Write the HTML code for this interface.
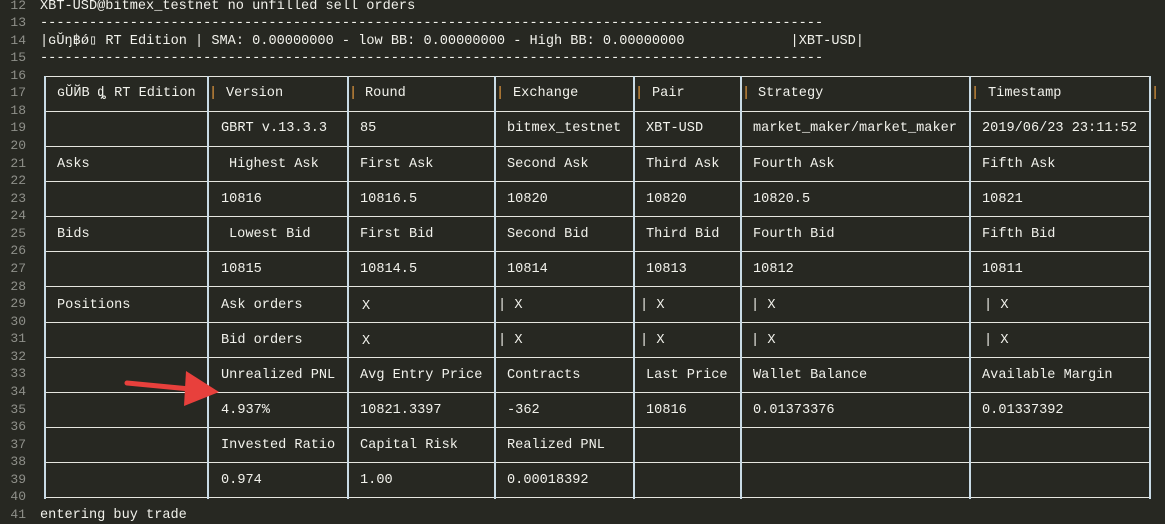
<!DOCTYPE html><html><head><style>
body{margin:0;width:1165px;height:523px;background:#272822;overflow:hidden;position:relative;font-family:"Liberation Mono","DejaVu Sans Mono",monospace;font-size:13.6px;color:#f2f2ec}
.t{position:absolute;white-space:pre;line-height:17px}
.ln{position:absolute;left:0;width:26px;text-align:right;color:#8f908a;font-size:13px;white-space:pre}
.h{position:absolute;height:1px;background:#e6e6e0;left:44px;width:1107px}
.v{position:absolute;width:2px;background:#c9dbe6;top:76px;height:423px}
.o{position:absolute;color:#f0a040}
</style></head><body>
<div class="ln" style="top:-2px">12</div><div class="ln" style="top:15px">13</div><div class="ln" style="top:33px">14</div><div class="ln" style="top:50px">15</div><div class="ln" style="top:68px">16</div><div class="ln" style="top:85px">17</div><div class="ln" style="top:103px">18</div><div class="ln" style="top:120px">19</div><div class="ln" style="top:138px">20</div><div class="ln" style="top:156px">21</div><div class="ln" style="top:173px">22</div><div class="ln" style="top:191px">23</div><div class="ln" style="top:208px">24</div><div class="ln" style="top:226px">25</div><div class="ln" style="top:243px">26</div><div class="ln" style="top:261px">27</div><div class="ln" style="top:279px">28</div><div class="ln" style="top:296px">29</div><div class="ln" style="top:314px">30</div><div class="ln" style="top:331px">31</div><div class="ln" style="top:349px">32</div><div class="ln" style="top:366px">33</div><div class="ln" style="top:384px">34</div><div class="ln" style="top:402px">35</div><div class="ln" style="top:419px">36</div><div class="ln" style="top:437px">37</div><div class="ln" style="top:454px">38</div><div class="ln" style="top:472px">39</div><div class="ln" style="top:489px">40</div><div class="ln" style="top:507px">41</div>

<div class="t" style="left:40px;top:-2px">XBT-USD@bitmex_testnet no unfilled sell orders</div>
<div class="t" style="left:40px;top:15px">------------------------------------------------------------------------------------------------</div>
<div class="t" style="left:40px;top:33px">|ɢŬŋ฿ǿ▯ RT Edition | SMA: 0.00000000 - low BB: 0.00000000 - High BB: 0.00000000             |XBT-USD|</div>
<div class="t" style="left:40px;top:50px">------------------------------------------------------------------------------------------------</div>
<div class="t" style="left:40px;top:507px">entering buy trade</div>

<div class="h" style="top:76px"></div><div class="h" style="top:111px"></div><div class="h" style="top:146px"></div><div class="h" style="top:181px"></div><div class="h" style="top:216px"></div><div class="h" style="top:251px"></div><div class="h" style="top:286px"></div><div class="h" style="top:322px"></div><div class="h" style="top:357px"></div><div class="h" style="top:392px"></div><div class="h" style="top:427px"></div><div class="h" style="top:462px"></div><div class="h" style="top:497px"></div>
<div class="v" style="left:44px"></div><div class="v" style="left:207px"></div><div class="v" style="left:347px"></div><div class="v" style="left:494px"></div><div class="v" style="left:633px"></div><div class="v" style="left:740px"></div><div class="v" style="left:969px"></div><div class="v" style="left:1149px"></div>

<div class="t" style="left:57px;top:85px">ɢŬЙB ȡ RT Edition</div>
<div class="t o" style="left:209px;top:85px">|</div><div class="t" style="left:226px;top:85px">Version</div>
<div class="t o" style="left:349px;top:85px">|</div><div class="t" style="left:365px;top:85px">Round</div>
<div class="t o" style="left:496px;top:85px">|</div><div class="t" style="left:513px;top:85px">Exchange</div>
<div class="t o" style="left:635px;top:85px">|</div><div class="t" style="left:652px;top:85px">Pair</div>
<div class="t o" style="left:742px;top:85px">|</div><div class="t" style="left:758px;top:85px">Strategy</div>
<div class="t o" style="left:971px;top:85px">|</div><div class="t" style="left:988px;top:85px">Timestamp</div>
<div class="t o" style="left:1151px;top:85px">|</div>

<div class="t" style="left:221px;top:120px">GBRT v.13.3.3</div><div class="t" style="left:360px;top:120px">85</div><div class="t" style="left:507px;top:120px">bitmex_testnet</div><div class="t" style="left:646px;top:120px">XBT-USD</div><div class="t" style="left:753px;top:120px">market_maker/market_maker</div><div class="t" style="left:982px;top:120px">2019/06/23 23:11:52</div>

<div class="t" style="left:57px;top:156px">Asks</div><div class="t" style="left:229px;top:156px">Highest Ask</div><div class="t" style="left:360px;top:156px">First Ask</div><div class="t" style="left:507px;top:156px">Second Ask</div><div class="t" style="left:646px;top:156px">Third Ask</div><div class="t" style="left:753px;top:156px">Fourth Ask</div><div class="t" style="left:982px;top:156px">Fifth Ask</div>
<div class="t" style="left:221px;top:191px">10816</div><div class="t" style="left:360px;top:191px">10816.5</div><div class="t" style="left:507px;top:191px">10820</div><div class="t" style="left:646px;top:191px">10820</div><div class="t" style="left:753px;top:191px">10820.5</div><div class="t" style="left:982px;top:191px">10821</div>

<div class="t" style="left:57px;top:226px">Bids</div><div class="t" style="left:229px;top:226px">Lowest Bid</div><div class="t" style="left:360px;top:226px">First Bid</div><div class="t" style="left:507px;top:226px">Second Bid</div><div class="t" style="left:646px;top:226px">Third Bid</div><div class="t" style="left:753px;top:226px">Fourth Bid</div><div class="t" style="left:982px;top:226px">Fifth Bid</div>
<div class="t" style="left:221px;top:261px">10815</div><div class="t" style="left:360px;top:261px">10814.5</div><div class="t" style="left:507px;top:261px">10814</div><div class="t" style="left:646px;top:261px">10813</div><div class="t" style="left:753px;top:261px">10812</div><div class="t" style="left:982px;top:261px">10811</div>

<div class="t" style="left:57px;top:297px">Positions</div><div class="t" style="left:221px;top:297px">Ask orders</div><div class="t" style="left:362px;top:298px">X</div><div class="t" style="left:498px;top:297px">| X</div><div class="t" style="left:640px;top:297px">| X</div><div class="t" style="left:751px;top:297px">| X</div><div class="t" style="left:984px;top:297px">| X</div>
<div class="t" style="left:221px;top:332px">Bid orders</div><div class="t" style="left:362px;top:333px">X</div><div class="t" style="left:498px;top:332px">| X</div><div class="t" style="left:640px;top:332px">| X</div><div class="t" style="left:751px;top:332px">| X</div><div class="t" style="left:984px;top:332px">| X</div>

<div class="t" style="left:221px;top:367px">Unrealized PNL</div><div class="t" style="left:360px;top:367px">Avg Entry Price</div><div class="t" style="left:507px;top:367px">Contracts</div><div class="t" style="left:646px;top:367px">Last Price</div><div class="t" style="left:753px;top:367px">Wallet Balance</div><div class="t" style="left:982px;top:367px">Available Margin</div>
<div class="t" style="left:221px;top:402px">4.937%</div><div class="t" style="left:360px;top:402px">10821.3397</div><div class="t" style="left:507px;top:402px">-362</div><div class="t" style="left:646px;top:402px">10816</div><div class="t" style="left:753px;top:402px">0.01373376</div><div class="t" style="left:982px;top:402px">0.01337392</div>
<div class="t" style="left:221px;top:437px">Invested Ratio</div><div class="t" style="left:360px;top:437px">Capital Risk</div><div class="t" style="left:507px;top:437px">Realized PNL</div>
<div class="t" style="left:221px;top:472px">0.974</div><div class="t" style="left:360px;top:472px">1.00</div><div class="t" style="left:507px;top:472px">0.00018392</div>

<svg style="position:absolute;left:0;top:0" width="1165" height="523"><line x1="127" y1="383" x2="190" y2="389" stroke="#e8403c" stroke-width="5" stroke-linecap="round"/><polygon points="186,371 219,392 184,406" fill="#e8403c"/></svg>
</body></html>
